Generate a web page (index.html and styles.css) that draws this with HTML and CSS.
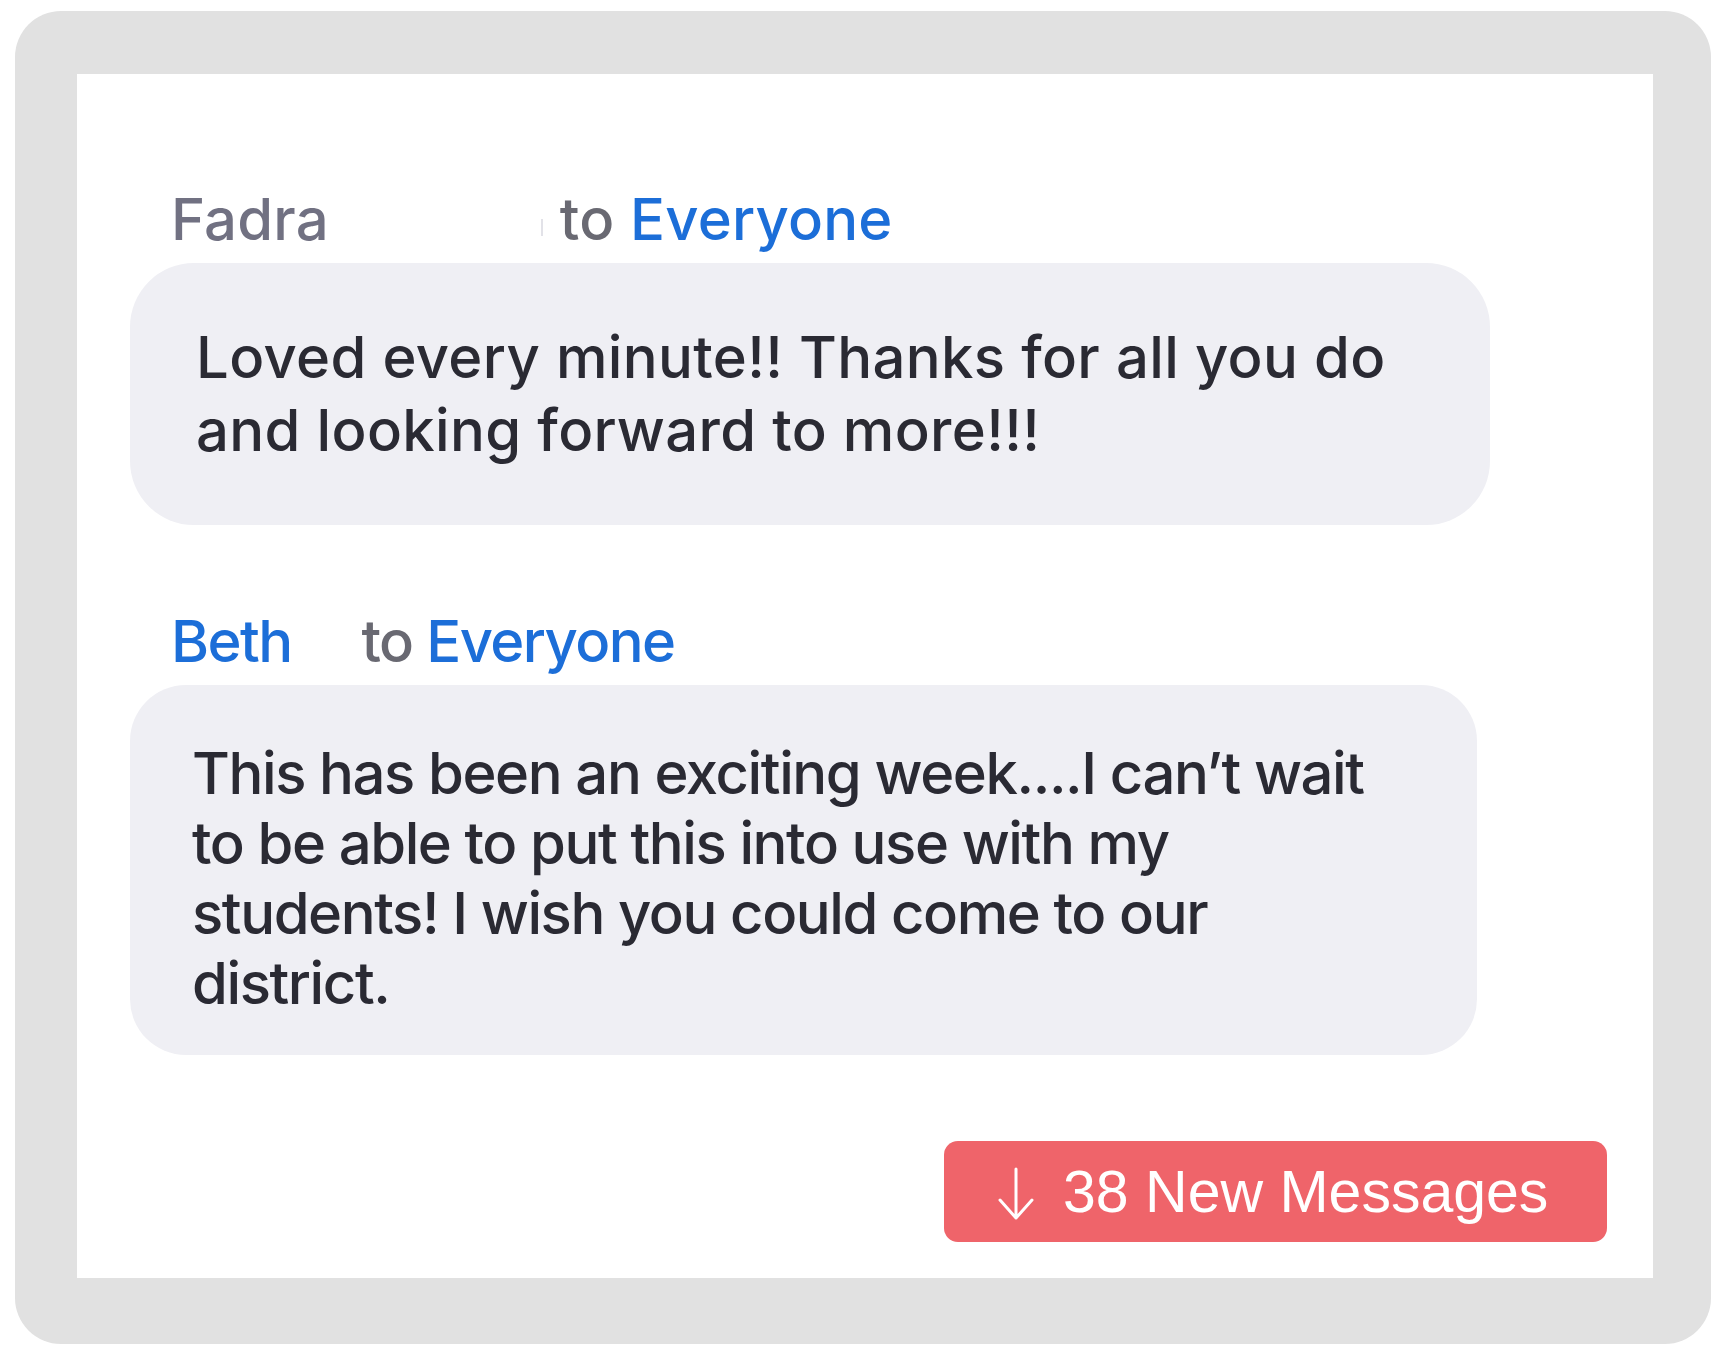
FILE: index.html
```html
<!DOCTYPE html>
<html lang="en">
<head>
    <meta charset="UTF-8">
    <title>Chat - New Messages</title>
    <link rel="stylesheet" href="styles.css">
</head>
<body>

<div class="frame">
    <div class="chat">

        <div class="message message-first">
            <div class="message-header header-fadra">
                <span class="sender sender-fadra">Fadra</span><span class="cut"></span><span class="to">to</span>
                <span class="target">Everyone</span>
            </div>
            <div class="bubble bubble-short">
                Loved every minute!! Thanks for all you do<br>
                and looking forward to more!!!
            </div>
        </div>

        <div class="message">
            <div class="message-header header-beth">
                <span class="sender sender-beth">Beth</span><span class="to">to</span>
                <span class="target">Everyone</span>
            </div>
            <div class="bubble bubble-long">
                This has been an exciting week....I can’t wait<br>
                to be able to put this into use with my<br>
                students! I wish you could come to our<br>
                district.
            </div>
        </div>

        <div class="new-row">
            <button class="new-btn">
                <svg class="arrow" width="40" height="54" viewBox="0 0 40 54">
                    <path d="M20 2 V51 M4 33 L20 51 L36 33" fill="none" stroke="#fff" stroke-width="3" stroke-linecap="round" stroke-linejoin="round"/>
                </svg>
                <span>38 New Messages</span>
            </button>
        </div>

    </div>
</div>

</body>
</html>
```

FILE: styles.css
```css
body { margin: 0; background-color: #fff; font-family: Inter, "Noto Sans", sans-serif; }

.frame {
    margin: 11px 0 0 15px;
    width: 1696px;
    height: 1333px;
    box-sizing: border-box;
    padding: 63px 58px 66px 62px;
    background-color: #e1e1e1;
    border-radius: 46px;
}
.chat {
    height: 100%;
    box-sizing: border-box;
    background-color: #fff;
    padding: 110px 0 0 53px;
    display: flex;
    flex-direction: column;
}

.message { margin-bottom: 81px; }
.message-header {
    font-size: 58px;
    line-height: 70px;
    padding-left: 41px;
    margin-bottom: 9px;
    font-weight: 500;
}
.header-fadra { letter-spacing: 0.2px; }
.header-beth { letter-spacing: -1.6px; }
.sender { color: #717182; }
.sender-fadra { margin-right: 212px; }
.sender-beth { color: #1c6ed8; margin-right: 70px; }
.cut {
    display: inline-block;
    width: 2px;
    height: 17px;
    margin-right: 17px;
    background-color: #e2e2e8;
    vertical-align: 4px;
}
.to { color: #696972; }
.target { color: #1c6ed8; }

.bubble {
    background-color: #efeff4;
    border-radius: 64px;
    color: #2a2a33;
    font-size: 58px;
    font-weight: 500;
    box-sizing: border-box;
}
.bubble-short { width: 1360px; line-height: 73px; padding: 58px 0 58px 66px; letter-spacing: 0.35px; }
.bubble-long { width: 1347px; line-height: 70px; padding: 53px 0 37px 62px; border-radius: 56px; letter-spacing: -1.4px; }

.message + .new-row { margin-top: 5px; }
.new-row { display: flex; justify-content: flex-end; padding-right: 46px; }
.new-btn {
    width: 663px;
    height: 101px;
    background-color: #ef646a;
    border: none;
    border-radius: 14px;
    color: #fff;
    font-family: "Liberation Sans", Arial, sans-serif;
    font-size: 59px;
    display: flex;
    align-items: center;
    padding: 0 0 0 52px;
}
.arrow { margin-right: 27px; margin-top: 4px; }
```
